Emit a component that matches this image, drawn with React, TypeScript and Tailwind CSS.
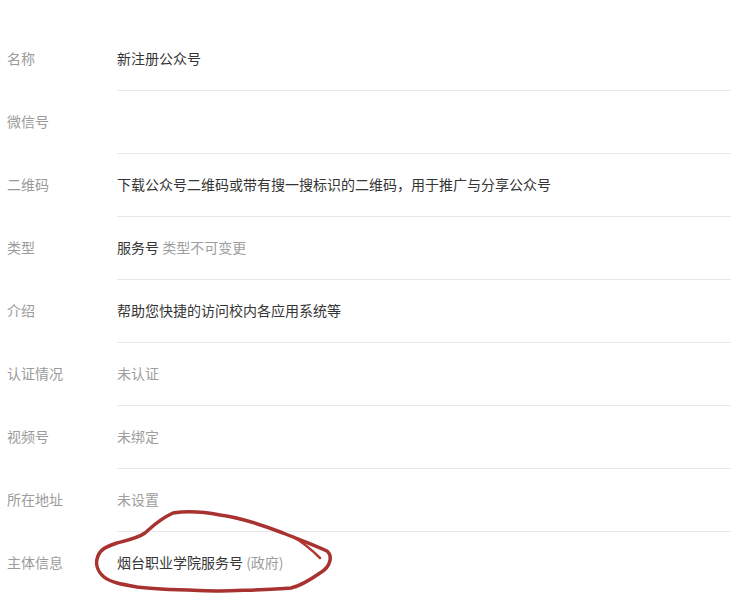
import React from "react";

type Row = { label: string; value: React.ReactNode; border?: boolean };

const rows: Row[] = [
  { label: "名称", value: <span className="text-[#353535]">新注册公众号</span> },
  { label: "微信号", value: null },
  {
    label: "二维码",
    value: (
      <span className="text-[#353535]">
        下载公众号二维码或带有搜一搜标识的二维码，用于推广与分享公众号
      </span>
    ),
  },
  {
    label: "类型",
    value: (
      <span>
        <span className="text-[#353535]">服务号</span>
        <span className="text-[#9e9e9e]"> 类型不可变更</span>
      </span>
    ),
  },
  { label: "介绍", value: <span className="text-[#353535]">帮助您快捷的访问校内各应用系统等</span> },
  { label: "认证情况", value: <span className="text-[#9e9e9e]">未认证</span> },
  { label: "视频号", value: <span className="text-[#9e9e9e]">未绑定</span> },
  { label: "所在地址", value: <span className="text-[#9e9e9e]">未设置</span> },
  {
    label: "主体信息",
    value: (
      <span>
        <span className="text-[#353535]">烟台职业学院服务号</span>
        <span className="text-[#9e9e9e]"> (政府)</span>
      </span>
    ),
    border: false,
  },
];

export default function App() {
  return (
    <div
      className="relative w-[731px] h-[593px] overflow-hidden bg-white pt-[28px] text-[14px]"
      style={{ fontFamily: '"Noto Sans CJK SC", "Noto Sans", sans-serif' }}
    >
      {rows.map((r, i) => (
        <div key={i} className="flex h-[63px]">
          <div className="w-[117px] shrink-0 pl-[7px] flex items-center text-[#9b9b9b]">
            <span className="-mt-[2px]">{r.label}</span>
          </div>
          <div
            className={
              r.border === false
                ? "flex-1 flex items-center"
                : "flex-1 flex items-center border-b border-[#e8e8e8]"
            }
          >
            <span className="-mt-[2px]">{r.value}</span>
          </div>
        </div>
      ))}
      <svg
        className="absolute left-0 top-0 pointer-events-none"
        width="731"
        height="593"
        viewBox="0 0 731 593"
      >
        <path
          d="M173 513 C185 511 200 511 220 515 C243 518 265 526 283 533 C295 538 312 544 327 551 C332 555 332 566 320 573 C310 580 300 586 291 588 C270 590 245 590 220 591 C190 590 160 590 137 587 C120 584 110 582 104 577 C97 571 95 563 98 556 C100 550 105 547 117 543 C128 540 138 538 145 533 C152 527 158 520 173 513 Z"
          fill="none"
          stroke="#a8322f"
          strokeWidth="3.5"
          strokeLinejoin="round"
          strokeLinecap="round"
        />
        <path
          d="M292 536 C302 542 312 550 320 558"
          fill="none"
          stroke="#b43530"
          strokeWidth="2.5"
          strokeLinecap="round"
        />
      </svg>
    </div>
  );
}
